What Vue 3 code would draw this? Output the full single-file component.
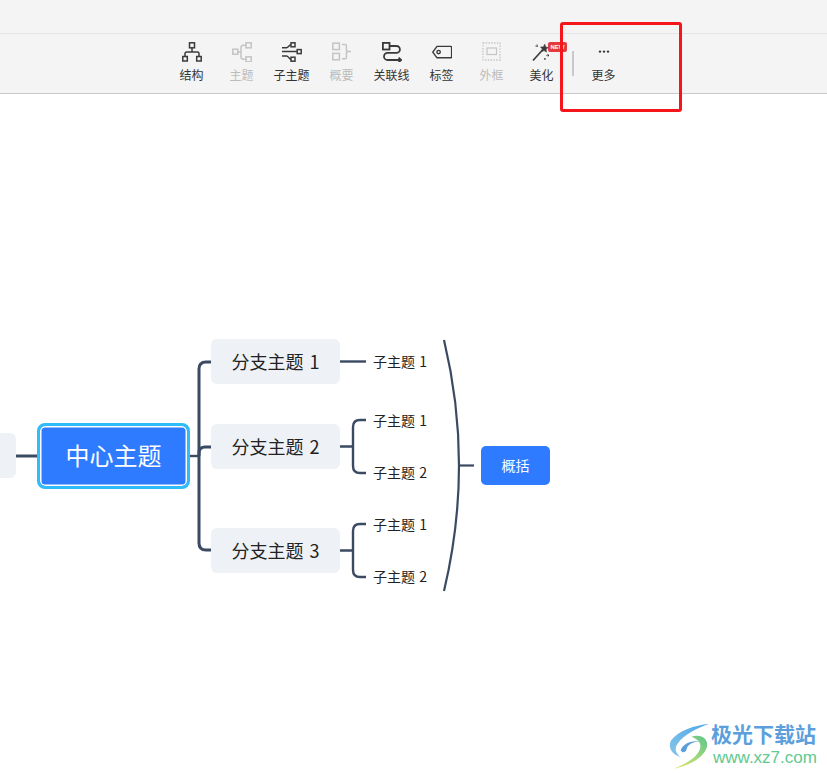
<script setup>
const tools = [
  { id: 'structure', label: '结构' },
  { id: 'topic', label: '主题', off: true },
  { id: 'subtopic', label: '子主题' },
  { id: 'summary', label: '概要', off: true },
  { id: 'relation', label: '关联线' },
  { id: 'tag', label: '标签' },
  { id: 'frame', label: '外框', off: true },
  { id: 'magic', label: '美化', badge: true },
];

const branches = [
  { text: '分支主题 1', top: 245 },
  { text: '分支主题 2', top: 330 },
  { text: '分支主题 3', top: 434 },
];

const leaves = [
  { text: '子主题 1', top: 254 },
  { text: '子主题 1', top: 313 },
  { text: '子主题 2', top: 365 },
  { text: '子主题 1', top: 417 },
  { text: '子主题 2', top: 469 },
];
</script>

<template>
  <div class="page">
    <header class="head">
      <div class="head__top"></div>
      <div class="toolbar">
        <div v-for="t in tools" :key="t.id" class="tool" :class="{ 'tool--off': t.off }">
          <svg class="tool__icon" viewBox="0 0 20 20" fill="none" stroke="currentColor" stroke-width="1.5">
            <g v-if="t.id === 'structure'">
              <rect x="7.5" y="0.8" width="5" height="5" />
              <path d="M10 6v4M3 14.5v-3a1.5 1.5 0 0 1 1.5-1.5h11a1.5 1.5 0 0 1 1.5 1.5v3" />
              <rect x="0.8" y="14.5" width="4.5" height="4.5" />
              <rect x="14.7" y="14.5" width="4.5" height="4.5" />
            </g>
            <g v-else-if="t.id === 'topic'">
              <rect x="0.8" y="7.2" width="5" height="5" />
              <rect x="14" y="0.8" width="5.2" height="5" />
              <rect x="14" y="14.8" width="5.2" height="5" />
              <path d="M6 10h3M14 3.3h-2.5A2.5 2.5 0 0 0 9 5.8v9a2.5 2.5 0 0 0 2.5 2.5H14" />
            </g>
            <g v-else-if="t.id === 'subtopic'">
              <rect x="9" y="0.8" width="4" height="4" />
              <rect x="15.2" y="7.6" width="4" height="4" />
              <rect x="9" y="15.2" width="4" height="4" />
              <path d="M0 5.8h4.5c2 0 2.5-3 4.5-3M0 9.6h15M0 14h4.5c2 0 2.5 3.2 4.5 3.2" />
            </g>
            <g v-else-if="t.id === 'summary'">
              <rect x="0.8" y="1.2" width="6.6" height="6.4" />
              <rect x="0.8" y="11.4" width="6.6" height="6.4" />
              <path d="M10 2.4h3.4a1 1 0 0 1 1 1V8.6l1.6 1-1.6 1v5.2a1 1 0 0 1-1 1H10M16 9.6h3" />
            </g>
            <g v-else-if="t.id === 'relation'" stroke-width="1.8">
              <rect x="0.9" y="0.9" width="6.6" height="6.6" />
              <path d="M7.5 4h7a3.2 3.2 0 0 1 0 6.8H5.6a3.3 3.3 0 0 0 0 7.2h13.4M16.6 15.6l2.6 2.4-2.6 2.2" />
            </g>
            <g v-else-if="t.id === 'tag'" stroke-width="1.4">
              <path d="M5 4.4h13.6a1 1 0 0 1 1 1v9.4a1 1 0 0 1-1 1H5L0.8 10.1z" />
              <circle cx="6.6" cy="10.1" r="1.7" />
            </g>
            <g v-else-if="t.id === 'frame'">
              <rect x="1" y="1" width="17" height="17" stroke-dasharray="1.4 1.4" stroke-width="1.3" />
              <rect x="5" y="6" width="9.5" height="6.5" stroke-width="1.2" />
            </g>
            <g v-else stroke-width="1.4">
              <path d="M1 18.5 10.5 8" stroke-width="1.7" />
              <path d="M12.8 2.2l.8 2.8 2.6.5-2.1 1.8.3 2.8-2.3-1.5-2.5 1 .7-2.6-1.8-2 2.8-.1z" fill="currentColor" stroke-width="0.6" />
              <path d="M5 2.5v3M3.5 4h3M16 12v3M14.5 13.5h3M13 16v2M12 17h2" stroke-width="1" stroke-dasharray="1 0.5" />
            </g>
          </svg>
          <span class="tool__label">{{ t.label }}</span>
          <span v-if="t.badge" class="tool__badge">NEW</span>
        </div>
        <div class="toolbar__sep"></div>
        <div class="tool">
          <svg class="tool__icon" viewBox="0 0 20 20" fill="currentColor">
            <circle cx="6" cy="9.6" r="1.2" />
            <circle cx="10" cy="9.6" r="1.2" />
            <circle cx="14" cy="9.6" r="1.2" />
          </svg>
          <span class="tool__label">更多</span>
        </div>
      </div>
    </header>

    <main class="canvas">
      <svg class="lines" width="827" height="679" viewBox="0 94 827 679" fill="none" stroke="#3b4a63">
        <path d="M15 456H40" stroke-width="3" />
        <path d="M186 456H199" stroke-width="2.4" />
        <path d="M211 362H206Q199 362 199 369V543Q199 550 206 550H211" stroke-width="3" />
        <path d="M199 456V453Q199 447 205 447H211" stroke-width="3" />
        <path d="M340 361.5H366" stroke-width="2.4" />
        <path d="M340 446.5H353M366 420H360Q353 420 353 427V466Q353 473 360 473H366" stroke-width="2.4" />
        <path d="M340 550.5H353M366 524H360Q353 524 353 531V570Q353 577 360 577H366" stroke-width="2.4" />
        <path d="M444 340Q474 465 444 591" stroke-width="2.2" />
        <path d="M459 465.5H474" stroke-width="2.2" />
      </svg>

      <div class="node node--stub"></div>
      <div class="node node--center">中心主题</div>
      <div
        v-for="b in branches"
        :key="b.top"
        class="node node--branch"
        :style="{ top: b.top + 'px' }"
      >{{ b.text }}</div>
      <div
        v-for="l in leaves"
        :key="l.top"
        class="node node--leaf"
        :style="{ top: l.top + 'px' }"
      >{{ l.text }}</div>
      <div class="node node--summary">概括</div>
    </main>

    <div class="mark"></div>

    <div class="logo">
      <svg class="logo__swoosh" viewBox="0 0 44 50">
        <defs>
          <linearGradient id="swooshBlue" x1="1" y1="0" x2="0" y2="1">
            <stop offset="0" stop-color="#4fa6e6" />
            <stop offset="1" stop-color="#86c6ea" />
          </linearGradient>
          <linearGradient id="swooshGreen" x1="1" y1="0" x2="0" y2="1">
            <stop offset="0" stop-color="#5cc58a" />
            <stop offset="1" stop-color="#e8ea6c" />
          </linearGradient>
        </defs>
        <path d="M42 3C28 4 10 10 3 20C0 27 3 34 13 37C8 33 6 28 10 23C16 14 30 7 42 3z" fill="url(#swooshBlue)" />
        <path d="M13 30C14 24 24 19 32 21C26 21 20 24 19 29C18 32 15 33 13 30z" fill="#5a9fd8" />
        <path d="M24 16C32 13 41 17 40 25C39 36 22 46 5 49C18 44 32 36 33 27C34 21 29 18 24 16z" fill="url(#swooshGreen)" />
      </svg>
      <div class="logo__text">
        <div class="logo__name">极光下载站</div>
        <div class="logo__url">www.xz7.com</div>
      </div>
    </div>
  </div>
</template>

<style scoped>
.page {
  position: relative;
  width: 827px;
  height: 773px;
  overflow: hidden;
  background: #fff;
  font-family: "Noto Sans CJK SC", "Noto Sans", sans-serif;
}

.head {
  height: 94px;
  box-sizing: border-box;
  background: #f4f4f4;
  border-bottom: 1px solid #c9c9c9;
}

.head__top {
  height: 33px;
  border-bottom: 1px solid #e4e4e4;
}

.toolbar {
  display: flex;
  align-items: flex-start;
  height: 60px;
  padding-left: 167px;
}

.tool {
  position: relative;
  display: flex;
  flex-direction: column;
  align-items: center;
  width: 50px;
  padding-top: 8px;
  color: #3a3a3a;
}

.tool--off {
  color: #c4c4c4;
}

.tool__icon {
  display: block;
  width: 20px;
  height: 20px;
}

.tool__label {
  margin-top: 4px;
  margin-right: 1px;
  font-size: 12px;
  line-height: 18px;
  color: #333;
}

.tool--off .tool__label {
  color: #bcbcbc;
}

.tool__badge {
  position: absolute;
  top: 8px;
  left: 31px;
  width: 19px;
  height: 10px;
  border-radius: 2px;
  background: #e23b3f;
  color: #fff;
  font-size: 6px;
  font-weight: 700;
  line-height: 10px;
  text-align: center;
  font-family: "Liberation Sans", sans-serif;
}

.toolbar__sep {
  width: 2px;
  height: 25px;
  margin: 17px 5px 0 5px;
  background: #c9c9c9;
}

.canvas {
  position: relative;
  height: 679px;
}

.lines {
  position: absolute;
  left: 0;
  top: 0;
}

.node {
  position: absolute;
  box-sizing: border-box;
  display: flex;
  align-items: center;
  justify-content: center;
}

.node--stub {
  left: -20px;
  top: 339px;
  width: 36px;
  height: 45px;
  border-radius: 6px;
  background: #eef1f5;
}

.node--center {
  left: 37px;
  top: 329px;
  width: 153px;
  height: 66px;
  padding-bottom: 4px;
  border: 3px solid #2ebcfb;
  border-radius: 8px;
  background: #2f7bff;
  box-shadow: inset 0 0 0 1.5px #fff;
  color: #fff;
  font-size: 24px;
}

.node--branch {
  left: 211px;
  width: 129px;
  height: 45px;
  padding-bottom: 2px;
  border-radius: 6px;
  background: #eef1f5;
  color: #222;
  font-size: 18px;
  word-spacing: 2px;
}

.node--leaf {
  left: 373px;
  height: 26px;
  color: #222;
  font-size: 14px;
  word-spacing: 1px;
}

.node--summary {
  left: 481px;
  top: 352px;
  width: 69px;
  height: 39px;
  padding-bottom: 2px;
  border-radius: 5px;
  background: #2f7bff;
  color: #fff;
  font-size: 14px;
}

.mark {
  position: absolute;
  left: 560px;
  top: 22px;
  width: 122px;
  height: 90px;
  box-sizing: border-box;
  border: 3px solid #f5161b;
  border-radius: 3px;
}

.logo {
  position: absolute;
  left: 668px;
  top: 720px;
  display: flex;
}

.logo__swoosh {
  width: 43px;
  height: 49px;
  margin-top: 1px;
}

.logo__name {
  font-size: 21px;
  font-weight: 700;
  line-height: 26px;
  color: #5c9fdc;
}

.logo__url {
  margin-top: 2px;
  margin-left: 2px;
  font-family: "Liberation Sans", sans-serif;
  font-size: 17px;
  line-height: 20px;
  color: #5fc98f;
}
</style>
